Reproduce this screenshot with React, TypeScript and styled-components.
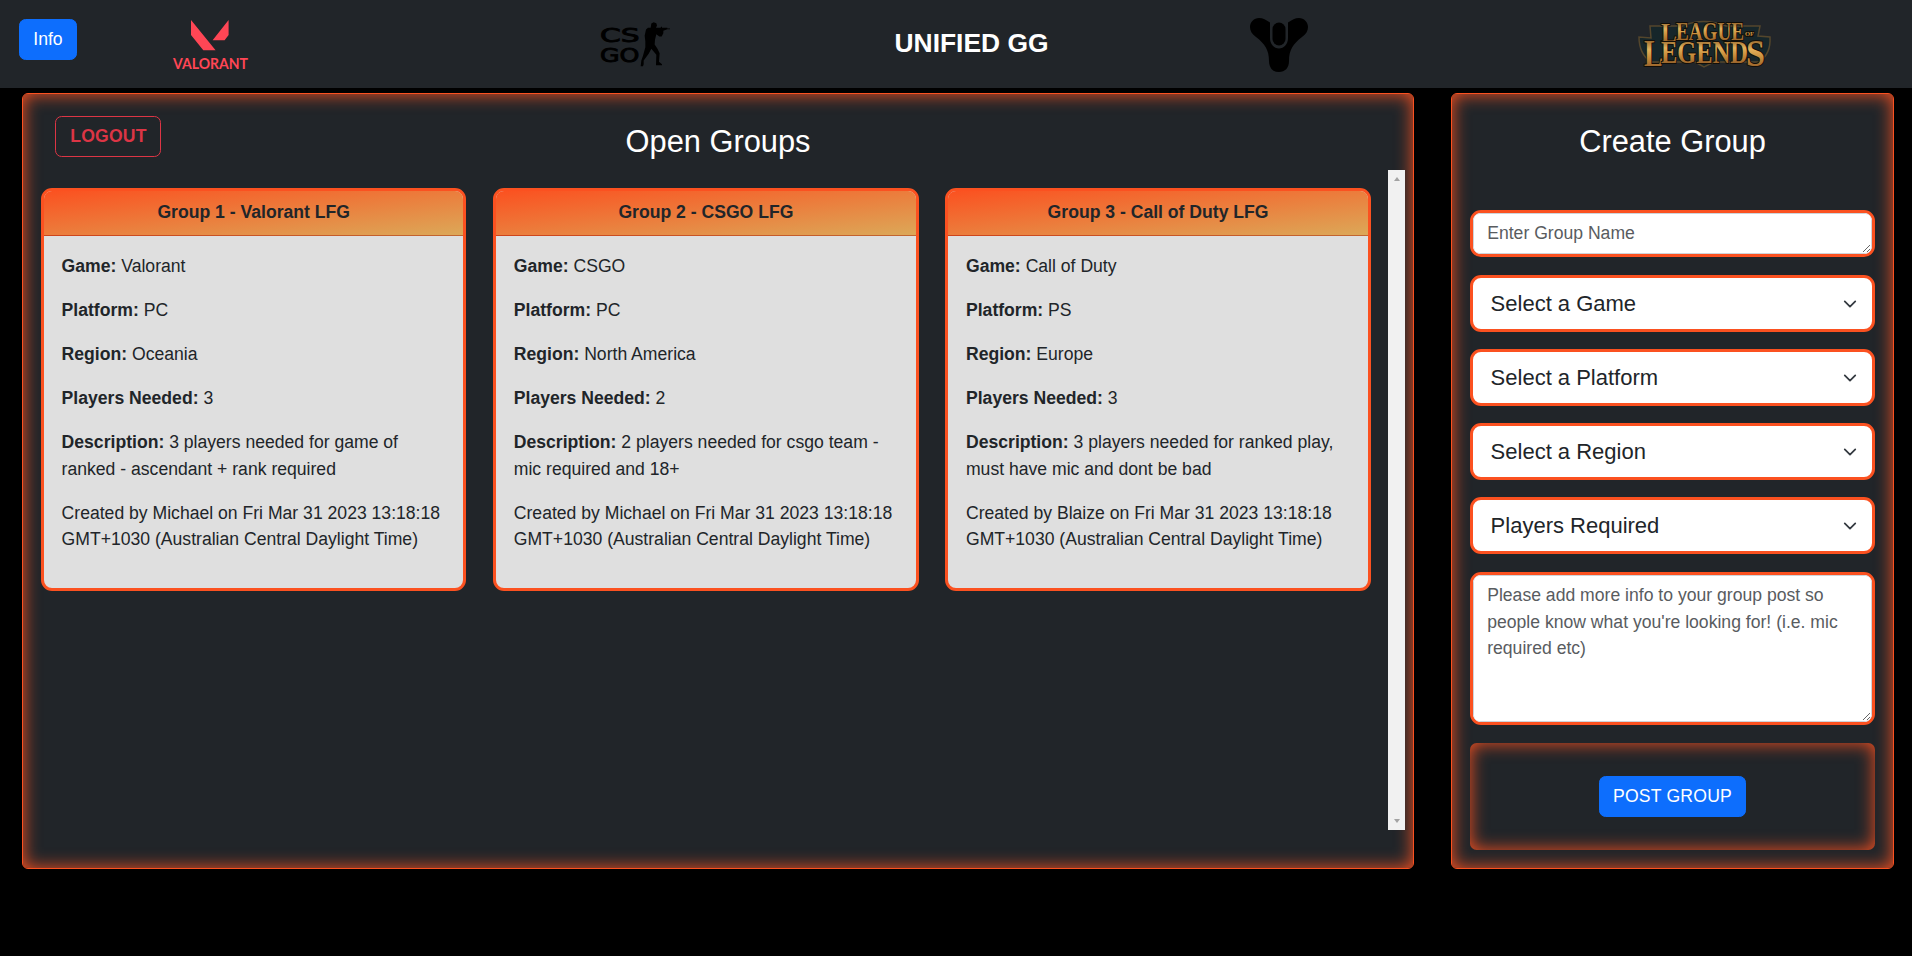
import React from 'react';
import styled, { createGlobalStyle } from 'styled-components';

const ORANGE = '#fb5120';
const DARK = '#212529';

const GlobalStyle = createGlobalStyle`
  *, *::before, *::after { box-sizing: border-box; }
  body {
    margin: 0;
    background: #000;
    color: ${DARK};
    font: 400 17.6px/1.5 "Liberation Sans", Arial, sans-serif;
  }
  p, h1, h2 { margin: 0; }
`;

const Navbar = styled.nav`
  display: flex;
  align-items: center;
  height: 88px;
  padding: 0 18px;
  background: ${DARK};
`;

const Button = styled.button<{ $outline?: boolean }>`
  height: 41px;
  padding: 0 0 2px;
  border: 1px solid ${p => (p.$outline ? '#dc3545' : '#0d6efd')};
  border-radius: 6.6px;
  background: ${p => (p.$outline ? 'transparent' : '#0d6efd')};
  color: ${p => (p.$outline ? '#dc3545' : '#fff')};
  font: ${p => (p.$outline ? 700 : 400)} 17.6px/26px "Liberation Sans", Arial, sans-serif;
`;

const InfoButton = styled(Button)`
  width: 58px;
  margin: 0 0 9px 1px;
`;

const NavLogo = styled.div<{ $left: number; $top?: number }>`
  display: flex;
  align-items: center;
  margin-left: ${p => p.$left}px;
  margin-top: ${p => p.$top || 0}px;
  svg { display: block; overflow: visible; }
`;

const Brand = styled.h1`
  width: 155px;
  margin: 0 0 1px 219px;
  color: #fff;
  font-size: 26.4px;
  line-height: 1.2;
  text-align: center;
  white-space: nowrap;
`;

const Main = styled.main`
  display: flex;
  gap: 37px;
  padding: 5px 18px 0 22px;
`;

const Panel = styled.section<{ $width: number }>`
  width: ${p => p.$width}px;
  height: 776px;
  border: 1px solid ${ORANGE};
  border-radius: 6px;
  background: ${DARK};
  box-shadow: inset 0 0 17px ${ORANGE};
`;

const GroupsPanel = styled(Panel)`
  padding: 22px 8px 0 18px;
`;

const GroupsHead = styled.header`
  display: grid;
  grid-template-columns: 1fr auto 1fr;
  align-items: start;
  height: 54px;
  padding: 0 24px 0 14px;
`;

const LogoutButton = styled(Button)`
  justify-self: start;
  width: 106px;
  padding-left: 1px;
  letter-spacing: 0.2px;
`;

const Title = styled.h2`
  padding-top: 7px;
  color: #fff;
  font-size: 30.8px;
  font-weight: 400;
  line-height: 37px;
  text-align: center;
`;

const ScrollArea = styled.div`
  display: flex;
  justify-content: space-between;
  height: 660px;
`;

const Cards = styled.div`
  display: grid;
  grid-template-columns: repeat(3, 425.4px);
  gap: 26.8px;
  align-items: start;
  padding-top: 18px;
`;

const Track = styled.div`
  display: flex;
  flex-direction: column;
  justify-content: space-between;
  align-items: center;
  width: 17px;
  padding: 7px 0;
  background: #f1f1f1;
`;

const Arrow = styled.i<{ $down?: boolean }>`
  border: 3.5px solid transparent;
  border-top: ${p => (p.$down ? '4px solid #a3a3a3' : '0')};
  border-bottom: ${p => (p.$down ? '0' : '4px solid #a3a3a3')};
`;

const Card = styled.article`
  overflow: hidden;
  border: 3px solid ${ORANGE};
  border-radius: 11px;
  background: #dfdfdf;
`;

const CardHead = styled.div`
  height: 45px;
  padding: 8px 17.6px;
  border-bottom: 1px solid rgba(0, 0, 0, 0.176);
  background: linear-gradient(to bottom right, #fb5120, #dca858);
  font-weight: 700;
  text-align: center;
`;

const CardBody = styled.div`
  display: flex;
  flex-direction: column;
  gap: 17.6px;
  padding: 17.3px 17.6px 35.5px;
`;

const FormPanel = styled(Panel)`
  display: flex;
  flex-direction: column;
  align-items: stretch;
  padding: 22px 18px 0;
`;

const Frame = styled.div<{ $gap: number }>`
  display: flex;
  margin-top: ${p => p.$gap}px;
  border: 3px solid ${ORANGE};
  border-radius: 11px;
  background: #fff;
  overflow: hidden;
`;

const TextArea = styled.textarea<{ $height: number }>`
  display: block;
  width: 100%;
  height: ${p => p.$height}px;
  padding: 6.2px 13.2px;
  border: 1px solid #ced4da;
  border-radius: 6.6px;
  background: #fff;
  font: inherit;
  overflow: hidden;
  &::placeholder { color: #595c5f; opacity: 1; }
`;

const SelectBox = styled.div`
  display: flex;
  flex: 1;
  align-items: center;
  justify-content: space-between;
  height: 51px;
  padding: 0 15px 0 17.6px;
  font-size: 22px;
  svg { display: block; }
`;

const PostBox = styled.div`
  display: flex;
  align-items: center;
  justify-content: center;
  height: 107px;
  margin-top: 18px;
  border-radius: 6.6px;
  box-shadow: inset 0 0 17px ${ORANGE};
`;

const PostButton = styled(Button)`
  width: 147px;
  letter-spacing: 0.2px;
`;

const groups = [
  { title: 'Group 1 - Valorant LFG', game: 'Valorant', platform: 'PC', region: 'Oceania', players: 3, by: 'Michael',
    text: '3 players needed for game of ranked - ascendant + rank required' },
  { title: 'Group 2 - CSGO LFG', game: 'CSGO', platform: 'PC', region: 'North America', players: 2, by: 'Michael',
    text: '2 players needed for csgo team - mic required and 18+' },
  { title: 'Group 3 - Call of Duty LFG', game: 'Call of Duty', platform: 'PS', region: 'Europe', players: 3, by: 'Blaize',
    text: '3 players needed for ranked play, must have mic and dont be bad' },
];

const selects = ['Select a Game', 'Select a Platform', 'Select a Region', 'Players Required'];

const ValorantLogo = () => (
  <svg width="75" height="52" viewBox="0 0 75 52" fill="#ff4655">
    <path d="M18 2V17L30.300 32.200H42.600ZM55.600 2L39.600 22.200H51.600L55.600 17Z" />
    <text x="0" y="51" fontFamily="Lato, sans-serif" fontSize="15" fontWeight="700" textLength="75" lengthAdjust="spacingAndGlyphs">VALORANT</text>
  </svg>
);

const CsgoLogo = () => (
  <svg width="74" height="45" viewBox="0 0 74 45" fill="#000">
    <g fontFamily="'DejaVu Sans', sans-serif" fontSize="20" stroke="#000" strokeWidth="0.9">
      <text x="-1" y="20" textLength="39.500" lengthAdjust="spacingAndGlyphs">CS</text>
      <text x="-1" y="40" textLength="39.500" lengthAdjust="spacingAndGlyphs">GO</text>
    </g>
    <g transform="translate(-21 -21.500) scale(0.33333)">
      <path d="M213 76L214 69L221 65L229 68L231 75L228 82H242L243 79H246V82H262V84H270V86H262L250 91V98L245 108L238 108L229 101L225 118L224 132L232 144L239 158L237 184L246 191V194H228L229 163L214 145L206 160L191 180V191L189 197H182L184 180L189 166L196 140V122L194 106L198 87L204 82H212Z" />
    </g>
  </svg>
);

const DestinyLogo = () => (
  <svg width="58" height="54" viewBox="0 0 58 54" fill="#000">
    <path d="M9 0C13 0 16 2 20 4.500V20C20 26 24 30.500 29 30.500S38 26 38 20V4.500C42 2 45 0 49 0C54 0 58 4 58 9C58 13 56 16 52 19C43 26 39 32 39 43C39 50 35 54 29 54S19 50 19 43C19 32 15 26 6 19C2 16 0 13 0 9C0 4 4 0 9 0Z" />
    <rect x="22.500" y="4.500" width="13" height="23" rx="6.500" />
  </svg>
);

const LeagueLogo = () => (
  <svg width="134" height="50" viewBox="0 0 134 50">
    <defs>
      <linearGradient id="gold" x1="0" y1="0" x2="0" y2="1">
        <stop offset="0.15" stopColor="#8f5f28" />
        <stop offset="0.4" stopColor="#e2b25c" />
        <stop offset="0.6" stopColor="#c88d3b" />
        <stop offset="0.85" stopColor="#95602a" />
      </linearGradient>
    </defs>
    <path d="M12 6H44Q66 -3 88 6H122L120 16L132 17Q133 34 121 42H76L66 47L57 42H13Q1 34 1 17L13 18Z" fill="#16262a" stroke="#54462c" strokeWidth="1.500" />
    <g fontFamily="'Liberation Serif', serif" fontWeight="700" fill="url(#gold)" stroke="#120e08" strokeWidth="2" paintOrder="stroke">
      <text x="23" y="21.500" fontSize="28" textLength="16" lengthAdjust="spacingAndGlyphs">L</text>
      <text x="38" y="20" fontSize="25" textLength="68" lengthAdjust="spacingAndGlyphs">EAGUE</text>
      <text x="107" y="15.500" fontSize="7" textLength="9" lengthAdjust="spacingAndGlyphs">OF</text>
      <text x="6" y="46" fontSize="37" textLength="19" lengthAdjust="spacingAndGlyphs">L</text>
      <text x="23" y="42.500" fontSize="32" textLength="87" lengthAdjust="spacingAndGlyphs">EGEND</text>
      <text x="108" y="46" fontSize="37" textLength="19" lengthAdjust="spacingAndGlyphs">S</text>
    </g>
  </svg>
);

const Chevron = () => (
  <svg width="14" height="14" viewBox="0 0 16 16" fill="none" stroke="#343a40" strokeLinecap="round" strokeLinejoin="round" strokeWidth="2">
    <path d="m2 5 6 6 6-6" />
  </svg>
);

export default function App() {
  return (
    <>
      <GlobalStyle />
      <Navbar>
        <InfoButton>Info</InfoButton>
        <NavLogo $left={96}><ValorantLogo /></NavLogo>
        <NavLogo $left={353}><CsgoLogo /></NavLogo>
        <Brand>UNIFIED GG</Brand>
        <NavLogo $left={201} $top={1}><DestinyLogo /></NavLogo>
        <NavLogo $left={330} $top={2}><LeagueLogo /></NavLogo>
      </Navbar>
      <Main>
        <GroupsPanel $width={1392}>
          <GroupsHead>
            <LogoutButton $outline>LOGOUT</LogoutButton>
            <Title>Open Groups</Title>
          </GroupsHead>
          <ScrollArea>
            <Cards>
              {groups.map(g => (
                <Card key={g.title}>
                  <CardHead>{g.title}</CardHead>
                  <CardBody>
                    <p><b>Game:</b> {g.game}</p>
                    <p><b>Platform:</b> {g.platform}</p>
                    <p><b>Region:</b> {g.region}</p>
                    <p><b>Players Needed:</b> {g.players}</p>
                    <p><b>Description:</b> {g.text}</p>
                    <p>{`Created by ${g.by} on Fri Mar 31 2023 13:18:18 GMT+1030 (Australian Central Daylight Time)`}</p>
                  </CardBody>
                </Card>
              ))}
            </Cards>
            <Track><Arrow /><Arrow $down /></Track>
          </ScrollArea>
        </GroupsPanel>
        <FormPanel $width={443}>
          <Title>Create Group</Title>
          <Frame $gap={50}><TextArea $height={41} placeholder="Enter Group Name" /></Frame>
          {selects.map(label => (
            <Frame key={label} $gap={label === selects[0] ? 18 : 17}>
              <SelectBox>{label}<Chevron /></SelectBox>
            </Frame>
          ))}
          <Frame $gap={18}>
            <TextArea $height={147} placeholder="Please add more info to your group post so people know what you're looking for! (i.e. mic required etc)" />
          </Frame>
          <PostBox><PostButton>POST GROUP</PostButton></PostBox>
        </FormPanel>
      </Main>
    </>
  );
}
